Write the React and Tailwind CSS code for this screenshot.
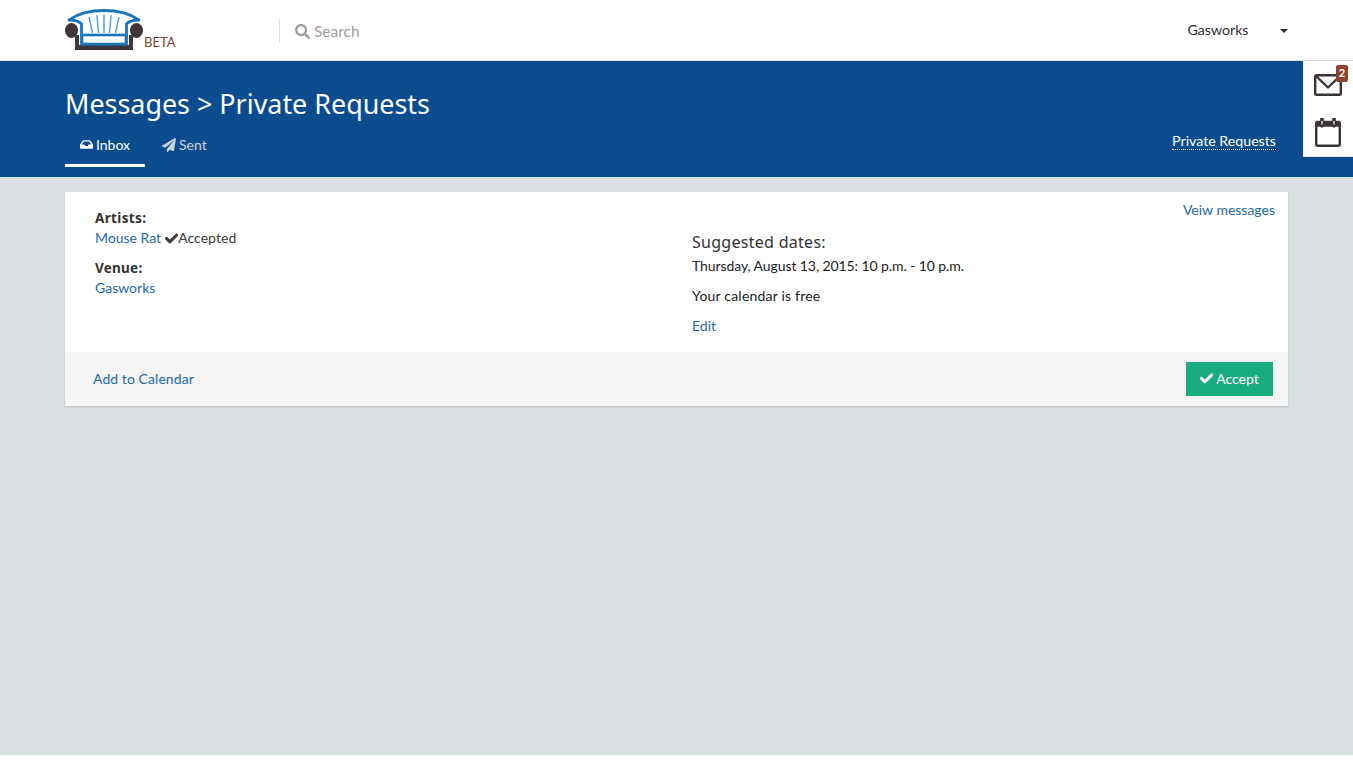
import React from "react";
import { FaCheck, FaInbox, FaPaperPlane, FaSearch } from "react-icons/fa";

const HEAD = "font-['Noto_Sans','Open_Sans',sans-serif]";

function SofaLogo() {
  return (
    <svg width="78" height="41" viewBox="0 0 78 41" className="shrink-0" aria-hidden="true">
      <path d="M10 26 H14 V36 H64 V26 H68 V41 H10 Z" fill="#3f3539" />
      <ellipse cx="6.5" cy="21.5" rx="6.5" ry="7.5" fill="#3f3539" />
      <ellipse cx="71.5" cy="21.5" rx="6.5" ry="7.5" fill="#3f3539" />
      <path d="M4 11 C15 3 27 1.5 39 1.5 C51 1.5 63 3 74 11 C69 11 64 12 61.5 15 V35 H16.5 V15 C14 12 9 11 4 11 Z" fill="#fff" stroke="#1b75bc" strokeWidth="2.8" strokeLinejoin="round" />
      <rect x="17" y="26" width="44" height="9" fill="#fff" stroke="#1b75bc" strokeWidth="2.6" />
      <path d="M24 8 L27.5 24 M32 6 L33.5 24 M39 5.5 V24 M46 6 L44.5 24 M54 8 L50.5 24" stroke="#5aa0d8" strokeWidth="1.5" fill="none" />
    </svg>
  );
}

function MailIcon() {
  return (
    <svg width="28" height="22" viewBox="0 0 28 22" fill="none" stroke="#3a3338" strokeWidth="2.4" className="block" aria-hidden="true">
      <rect x="1.2" y="1.2" width="25.6" height="19.6" rx="1.5" />
      <path d="M2 2 L14 13.5 L26 2" strokeLinejoin="round" />
    </svg>
  );
}

function CalendarIcon() {
  return (
    <svg width="26" height="29" viewBox="0 0 26 29" fill="none" stroke="#3a3338" strokeWidth="2.4" className="block" aria-hidden="true">
      <rect x="1.2" y="4" width="23.6" height="23.8" rx="1.5" />
      <path d="M1.2 6.5 H24.8" strokeWidth="4.5" />
      <path d="M7 1 V8 M19 1 V8" strokeWidth="3.6" strokeLinecap="round" />
      <path d="M7 3 V6.5 M19 3 V6.5" stroke="#fff" strokeWidth="1.2" />
    </svg>
  );
}

export default function App() {
  return (
    <div className="relative min-h-[767px] bg-white font-['Lato',sans-serif] text-[14px] text-[#333]">
      {/* top bar */}
      <header className="flex h-[61px] items-start border-b border-[#ddd] bg-white pl-[65px] pr-[65px]">
        <div className="flex w-[214px] items-end pt-[9px]">
          <SofaLogo />
          <span className="mb-[1px] ml-[1px] text-[13px] leading-[14px] text-[#7a4330]">BETA</span>
        </div>
        <div className="mt-[19px] flex h-[24px] items-center gap-[4px] border-l border-[#ddd] pl-[15px] pt-[1px] text-[15.5px] text-[#a39c9c]">
          <FaSearch className="text-[15px]" />
          <span>Search</span>
        </div>
        <div className="ml-auto flex h-[60px] items-center text-[#2f2f2f]">
          <span className="text-[14.2px]">Gasworks</span>
          <span className="ml-[31.5px] mt-[2px] h-0 w-0 border-x-[4.5px] border-t-[4.5px] border-x-transparent border-t-[#333]" />
        </div>
      </header>

      {/* blue band */}
      <section className="flex h-[116px] flex-col bg-[#0a4c8e] px-[65px] text-white">
        <h1 className={`${HEAD} mt-[24px] text-[26.9px] leading-[38px] font-normal`}>Messages &gt; Private Requests</h1>
        <div className="mt-[2px] flex items-start">
          <div className="flex h-[42px] w-[80px] items-center justify-center gap-[3px] border-b-[3px] border-white pb-[1px] text-[14px]">
            <FaInbox className="text-[13px]" />
            <span>Inbox</span>
          </div>
          <div className="ml-[17px] flex h-[39px] items-center gap-[3px] text-[14px] text-[#c9d3de]">
            <FaPaperPlane className="text-[14px]" />
            <span>Sent</span>
          </div>
          <span className="ml-auto mr-[12px] mt-[8px] border-b border-dotted border-white text-[14.2px] leading-[16px]">Private Requests</span>
        </div>
      </section>

      {/* side tab */}
      <aside className="absolute right-0 top-[61px] flex h-[96px] w-[50px] flex-col items-center border-b border-[#ddd] bg-white">
        <div className="relative mt-[13px] h-[22px]">
          <MailIcon />
          <span className="absolute -right-[6px] -top-[9px] flex h-[17px] w-[12px] items-center justify-center rounded-[2px] bg-[#8c4531] text-[11px] font-bold text-white">2</span>
        </div>
        <div className="mt-[22px]">
          <CalendarIcon />
        </div>
      </aside>

      {/* content */}
      <main className="h-[578px] bg-[#d9dfe1] px-[65px] pt-[15px]">
        <div className="bg-white shadow-[0_1px_2px_rgba(0,0,0,0.15)]">
          <div className="relative flex h-[160px]">
            <div className="w-[627px] pl-[30px] pt-[17px]">
              <div className={`${HEAD} text-[13.5px] leading-[18px] font-bold tracking-[0.35px] text-[#333]`}>Artists:</div>
              <div className="mt-[1px] flex items-center leading-[20px]">
                <span className="text-[#1f69a8]">Mouse Rat</span>
                <FaCheck className="ml-[4px] stroke-current stroke-[24px] text-[13px] text-[#3b3b3b]" />
                <span className="tracking-[0.05px] text-[#3a3a3a]">Accepted</span>
              </div>
              <div className={`${HEAD} mt-[11px] text-[13.5px] leading-[18px] font-bold tracking-[0.25px] text-[#333]`}>Venue:</div>
              <div className="mt-[1px] leading-[20px] text-[#1f69a8]">Gasworks</div>
            </div>
            <div className="pt-[39px]">
              <div className={`${HEAD} text-[16px] leading-[22px] tracking-[0.28px] text-[#333]`}>Suggested dates:</div>
              <div className="mt-[3px] leading-[20px] tracking-[-0.09px] text-[#222]">Thursday, August 13, 2015: 10 p.m. - 10 p.m.</div>
              <div className="mt-[10px] leading-[20px] tracking-[0.2px] text-[#222]">Your calendar is free</div>
              <div className="mt-[10px] leading-[20px] text-[#1f69a8]">Edit</div>
            </div>
            <span className="absolute right-[13px] top-[8px] leading-[20px] text-[#1f69a8]">Veiw messages</span>
          </div>
          <div className="flex h-[54px] items-center justify-between bg-[#f5f5f5] pl-[28px] pr-[15px]">
            <span className="-mt-[2px] tracking-[0.07px] text-[#1f69a8]">Add to Calendar</span>
            <button className="flex h-[34px] w-[87px] items-center justify-center gap-[3px] bg-[#19ac7f] pb-[2px] text-white">
              <FaCheck className="mt-[1px] stroke-current stroke-[24px] text-[13px]" />
              <span>Accept</span>
            </button>
          </div>
        </div>
      </main>
    </div>
  );
}
